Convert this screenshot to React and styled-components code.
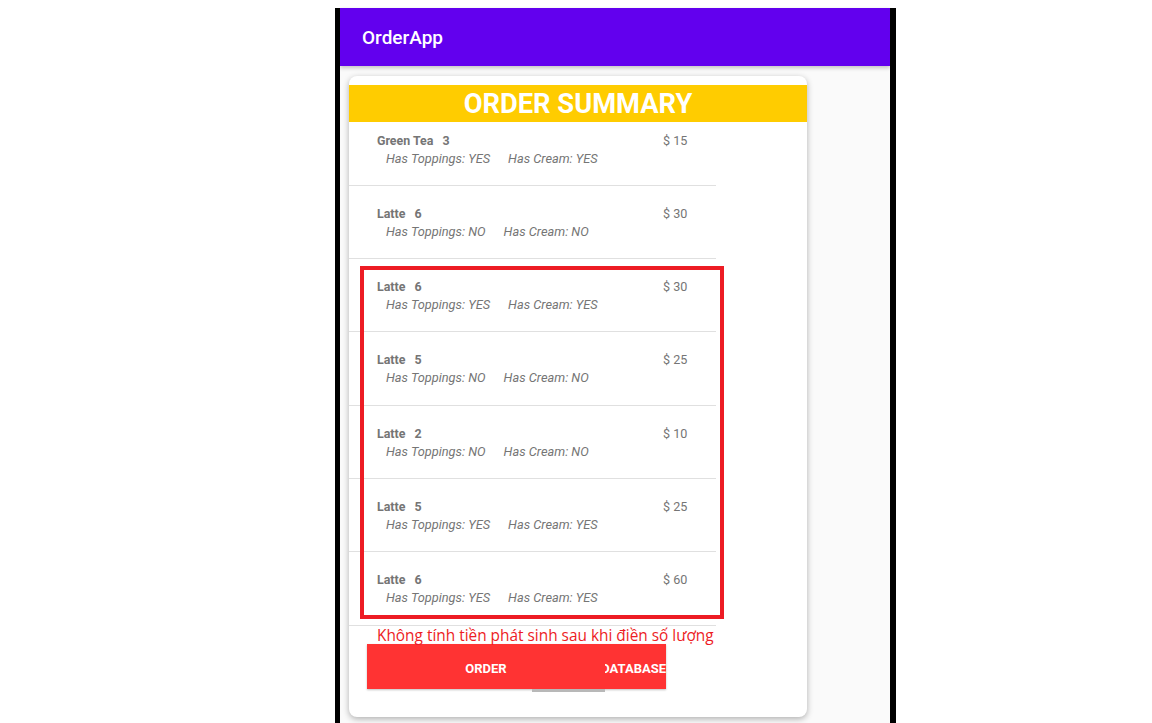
import React from "react";
import styled, { createGlobalStyle } from "styled-components";

const Global = createGlobalStyle`
  html, body { margin: 0; padding: 0; background: #ffffff; }
  body { font-family: Roboto, "Noto Sans", sans-serif; }
  * { box-sizing: border-box; }
`;

const Page = styled.div`
  width: 1152px;
  height: 723px;
  overflow: hidden;
  padding-top: 8px;
  padding-left: 335px;
`;

const Phone = styled.div`
  width: 561px;
  height: 715px;
  border-left: 5px solid #000;
  border-right: 6px solid #000;
  background: #fafafa;
  display: flex;
  flex-direction: column;
  position: relative;
`;

const AppBar = styled.div`
  height: 58px;
  flex: none;
  background: #6200ee;
  color: #fff;
  display: flex;
  align-items: center;
  padding-left: 22px;
  font-size: 19px;
  font-weight: 500;
  box-shadow: 0 2px 4px rgba(0, 0, 0, 0.22);
  position: relative;
  z-index: 1;
`;

const Card = styled.div`
  margin: 10px 0 0 9px;
  width: 458px;
  height: 641px;
  background: #fff;
  border-radius: 8px;
  box-shadow: 0 2px 6px rgba(0, 0, 0, 0.3);
  padding-top: 9px;
  display: flex;
  flex-direction: column;
`;

const Header = styled.div`
  height: 37px;
  background: #ffcc00;
  color: #fff;
  font-size: 27.3px;
  font-weight: 700;
  line-height: 39px;
  text-align: center;
  flex: none;
`;

const List = styled.div`
  width: 367px;
  height: 504px;
  overflow: hidden;
  flex: none;
`;

const ListInner = styled.div`
  margin-top: -9.5px;
`;

const Row = styled.div`
  height: 73.33px;
  border-bottom: 1px solid #e0e0e0;
  padding: 20px 0 0 28px;
  color: #757575;
  font-size: 12.4px;
`;

const TopLine = styled.div`
  display: flex;
  line-height: 16px;
`;

const Name = styled.div`
  width: 286px;
  font-weight: 700;
`;

const Qty = styled.span`
  margin-left: 9px;
`;

const Price = styled.div`
  font-size: 12.6px;
`;

const SubLine = styled.div`
  display: flex;
  gap: 18px;
  margin-top: 2px;
  padding-left: 9px;
  line-height: 16px;
  font-size: 12.8px;
  font-style: italic;
`;

const Note = styled.div`
  color: #ed1c24;
  font-family: "Open Sans", "Noto Sans", sans-serif;
  font-size: 15.4px;
  line-height: 20px;
  padding-left: 28px;
  height: 18px;
  position: relative;
  z-index: 1;
  white-space: nowrap;
`;

const ButtonBar = styled.div`
  margin-left: 18px;
  display: flex;
  height: 45px;
  width: 299px;
  box-shadow: 0 1px 2px rgba(0, 0, 0, 0.25);
`;

const Button = styled.div`
  width: ${(p) => p.$w}px;
  height: 45px;
  padding-top: 3px;
  background: #ff3333;
  color: #fff;
  font-size: 13px;
  font-weight: 700;
  display: flex;
  align-items: center;
  justify-content: ${(p) => (p.$end ? "flex-end" : "center")};
  overflow: hidden;
  white-space: nowrap;
`;

const ShadowStrip = styled.div`
  margin-left: 183px;
  width: 73px;
  height: 3px;
  background: #b8b8b8;
`;

const Highlight = styled.div`
  position: absolute;
  left: 20px;
  top: 258px;
  width: 364px;
  height: 353px;
  border: 4px solid #ed1c24;
  pointer-events: none;
`;

const items = [
  { name: "Green Tea", qty: 3, price: 15, top: "YES", cream: "YES" },
  { name: "Latte", qty: 6, price: 30, top: "NO", cream: "NO" },
  { name: "Latte", qty: 6, price: 30, top: "YES", cream: "YES" },
  { name: "Latte", qty: 5, price: 25, top: "NO", cream: "NO" },
  { name: "Latte", qty: 2, price: 10, top: "NO", cream: "NO" },
  { name: "Latte", qty: 5, price: 25, top: "YES", cream: "YES" },
  { name: "Latte", qty: 6, price: 60, top: "YES", cream: "YES" },
];

export default function App() {
  return (
    <>
      <Global />
      <Page>
        <Phone>
          <AppBar>OrderApp</AppBar>
          <Card>
            <Header>ORDER SUMMARY</Header>
            <List>
              <ListInner>
                {items.map((it, i) => (
                  <Row key={i}>
                    <TopLine>
                      <Name>
                        {it.name}
                        <Qty>{it.qty}</Qty>
                      </Name>
                      <Price>$ {it.price}</Price>
                    </TopLine>
                    <SubLine>
                      <span>Has Toppings: {it.top}</span>
                      <span>Has Cream: {it.cream}</span>
                    </SubLine>
                  </Row>
                ))}
              </ListInner>
            </List>
            <Note>Không tính tiền phát sinh sau khi điền số lượng</Note>
            <ButtonBar>
              <Button $w={238}>ORDER</Button>
              <Button $w={61} $end>DATABASE</Button>
            </ButtonBar>
            <ShadowStrip />
          </Card>
          <Highlight />
        </Phone>
      </Page>
    </>
  );
}
